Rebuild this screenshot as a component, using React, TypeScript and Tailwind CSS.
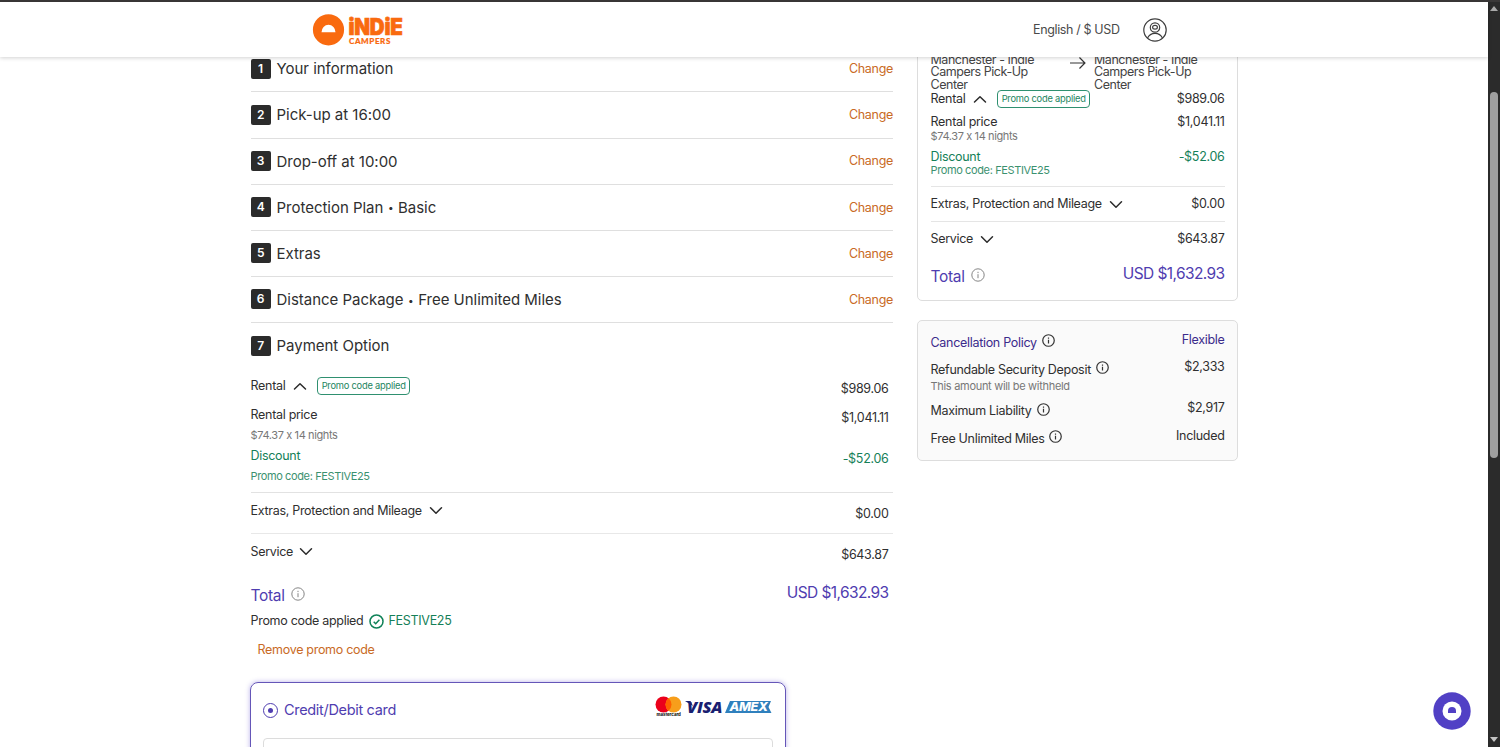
import React from 'react';

interface LineProps {
    label: React.ReactNode;
    value?: string;
    className?: string;
    valueClass?: string;
}

const steps = [
    ['Your information'],
    ['Pick-up at 16:00'],
    ['Drop-off at 10:00'],
    ['Protection Plan', 'Basic'],
    ['Extras'],
    ['Distance Package', 'Free Unlimited Miles'],
];

function Chevron({ up = false }: { up?: boolean }) {
    return (
        <svg className="shrink-0" width="14" height="9" viewBox="0 0 14 9" fill="none" stroke="#2b2b2b" strokeWidth="1.5" strokeLinecap="round" strokeLinejoin="round">
            <path d={up ? 'M1.5 7 7 1.7 12.5 7' : 'M1.5 1.7 7 7.2 12.5 1.7'} />
        </svg>
    );
}

function Info({ size = 13, color = '#333333', stroke = 1.3 }: { size?: number; color?: string; stroke?: number }) {
    return (
        <svg className="shrink-0" width={size} height={size} viewBox="0 0 14 14" fill="none" stroke={color} strokeWidth={stroke}>
            <circle cx="7" cy="7" r="6.2" />
            <path d="M7 6.2v4M7 3.8v1.3" />
        </svg>
    );
}

function Line({ label, value, className = '', valueClass = 'mt-[3px]' }: LineProps) {
    return (
        <div className={`flex h-5 justify-between whitespace-nowrap leading-5 ${className}`}>
            <div className="flex items-center">{label}</div>
            {value && <span className={valueClass}>{value}</span>}
        </div>
    );
}

function PromoBadge() {
    return (
        <span className="flex h-[18px] w-[92.5px] shrink-0 items-center justify-center rounded-[4px] border border-[#2f9070] text-[9.3px] tracking-[-0.22px] text-[#1d8560]">
            Promo code applied
        </span>
    );
}

function Logo() {
    return (
        <svg width="96" height="36" viewBox="0 0 96 36" fill="#f96a0f">
            <path fillRule="evenodd" d="M16.500 2.200a15.600 15.600 0 1 0 0 31.200a15.600 15.600 0 0 0 0-31.200ZM9.500 20.300a7 7.500 0 0 1 14 0Z" />
            <text x="36.500" y="22.600" fontFamily="Inter, sans-serif" fontSize="22.500" fontWeight="900" stroke="#f96a0f" strokeWidth="0.700" textLength="54" lengthAdjust="spacingAndGlyphs">iNDiE</text>
            <text x="37" y="31.500" fontFamily="Lato, sans-serif" fontSize="8" fontWeight="900" stroke="#f96a0f" strokeWidth="0.200" textLength="41">CAMPERS</text>
        </svg>
    );
}

function CardBrands() {
    return (
        <svg width="118" height="24" viewBox="0 0 118 24">
            <circle cx="8.500" cy="9.500" r="8" fill="#eb001b" />
            <circle cx="18.500" cy="9.500" r="8" fill="#f79e1b" />
            <path d="M13.500 3.250a8 8 0 0 1 0 12.500 8 8 0 0 1 0-12.500Z" fill="#ff5f00" />
            <text x="1.500" y="20.800" fontFamily="Inter, sans-serif" fontSize="4.300" fontWeight="800" textLength="24" fill="#222">mastercard</text>
            <text x="32" y="17.500" fontFamily="Open Sans, sans-serif" fontSize="16" fontWeight="800" fontStyle="italic" textLength="35" lengthAdjust="spacingAndGlyphs" fill="#1a1f71">VISA</text>
            <path d="M30 6h5.500l2.500 5Z" fill="#1a1f71" />
            <path d="M75 6h41l-2.500 6 3 6H70Z" fill="#2f80bd" />
            <text x="74.500" y="16.300" fontFamily="Inter, sans-serif" fontSize="12" fontWeight="800" fontStyle="italic" textLength="38" lengthAdjust="spacingAndGlyphs" fill="#ffffff">AMEX</text>
        </svg>
    );
}

function Header() {
    return (
        <header className="relative z-10 flex h-[55px] shrink-0 items-center bg-white pl-[312px] shadow-[0_1px_4px_rgba(0,0,0,0.18)]">
            <Logo />
            <span className="ml-[625px] w-[110px] pt-[1.5px] whitespace-nowrap tracking-[-0.36px] text-[#4a4a4a]">English / $ USD</span>
            <svg width="24" height="24" viewBox="0 0 24 24" fill="none" stroke="#3f3f3f" strokeWidth="1.200">
                <circle cx="12" cy="12" r="11.200" />
                <circle cx="12" cy="9.500" r="4.700" />
                <ellipse cx="12" cy="9.300" rx="2.400" ry="1.900" />
                <path d="M4.400 20.200c1.500-3.200 4.200-4.900 7.600-4.900s6.100 1.700 7.600 4.900" />
            </svg>
        </header>
    );
}

function StepLabel({ number, parts }: { number: number; parts: string[] }) {
    return (
        <>
            <span className="mr-[6px] flex size-5 items-center justify-center rounded-[2px] bg-[#2b2b2b] text-[12px] font-semibold text-white">{number}</span>
            <span className="flex items-center pt-[1.5px] text-[15px] tracking-[-0.02px] whitespace-nowrap">
                {parts[0]}
                {parts[1] && <><span className="mx-[4.5px] text-[10px]">•</span>{parts[1]}</>}
            </span>
        </>
    );
}

function Checkout() {
    return (
        <main className="-mt-[10.7px] ml-[250.5px] w-[642.5px] shrink-0">
            {steps.map((parts, idx) => (
                <div key={parts[0]} className="flex h-[46.1px] items-center border-b border-[#dfdfdf]">
                    <StepLabel number={idx + 1} parts={parts} />
                    <span className="ml-auto pt-[1.5px] text-[#c96a25]">Change</span>
                </div>
            ))}
            <div className="flex h-[45.7px] items-center">
                <StepLabel number={7} parts={['Payment Option']} />
            </div>

            <div className="border-b border-[#e2e2e2] pt-[7.9px] pb-[5.1px]">
                <Line className="pr-[4.5px]" label={<>Rental<span className="ml-[8px] mr-[10px]"><Chevron up /></span><PromoBadge /></>} value="$989.06" />
                <Line className="mt-[9px] pr-[4.5px]" label="Rental price" value="$1,041.11" />
                <Line className="text-[11px] tracking-[-0.38px] text-[#777777]" label="$74.37 x 14 nights" />
                <Line className="mt-px pr-[4.5px] text-[#158058]" label="Discount" value="-$52.06" />
                <Line className="text-[11px] tracking-[-0.38px] text-[#3b916f]" label="Promo code: FESTIVE25" />
            </div>
            <div className="h-[41.5px] border-b border-[#e8e8e8] pt-[8px]">
                <Line className="pr-[4.5px]" label={<>Extras, Protection and Mileage<span className="ml-[7px]"><Chevron /></span></>} value="$0.00" />
            </div>
            <Line className="mt-[7.5px] pr-[4.5px]" label={<>Service<span className="ml-[6px]"><Chevron /></span></>} value="$643.87" />
            <Line
                className="mt-[24px] pr-[4.5px] text-[15.5px] text-[#4f3db0]"
                label={<>Total<span className="mb-[4px] ml-[6px]"><Info size={14} color="#777777" stroke={0.9} /></span></>}
                value="USD $1,632.93"
                valueClass="-mt-[3px] tracking-[-0.6px]"
            />
            <Line
                className="mt-[5.8px]"
                label={
                    <>
                        Promo code applied
                        <svg className="mr-[4.5px] ml-[5.5px]" width="15" height="15" viewBox="0 0 15 15" fill="none" stroke="#0f8258" strokeWidth="1.500">
                            <circle cx="7.500" cy="7.500" r="6.500" />
                            <path d="m4.700 7.700 2 2 3.700-4" />
                        </svg>
                        <span className="text-[#158058]">FESTIVE25</span>
                    </>
                }
            />
            <Line className="mt-[9px] pl-[7px] text-[#c96a25]" label="Remove promo code" />

            <section className="mt-[21.2px] -ml-[0.5px] h-[120px] w-[536px] rounded-[8px] border border-[#6556b8] px-3 shadow-[0_0_5px_rgba(80,60,200,0.4)]">
                <div className="flex h-[55px] items-center text-[14.5px] tracking-[-0.32px] text-[#4f3db0]">
                    <span className="mr-[6px] flex size-[15px] items-center justify-center rounded-full border border-[#4f3db0]">
                        <span className="size-[5px] rounded-full bg-[#4f3db0]" />
                    </span>
                    <span>Credit/Debit card</span>
                    <span className="mb-[6px] ml-auto"><CardBrands /></span>
                </div>
                <div className="h-12 rounded-[4px] border border-[#dcdcdc]" />
            </section>
        </main>
    );
}

function Place() {
    return (
        <div className="w-[131px] leading-[12.4px] tracking-[-0.45px] text-[#444444]">
            Manchester - Indie<br />Campers Pick-Up<br />Center
        </div>
    );
}

function InfoMark() {
    return <span className="mb-[4px] ml-[5px]"><Info /></span>;
}

function Summary() {
    return (
        <aside className="-mt-2 ml-[24px] w-[320.5px] shrink-0">
            <section className="h-[252px] rounded-b-[5px] border border-[#dddddd] pr-3 pl-[12.5px]">
                <div className="flex pt-[4px]">
                    <Place />
                    <svg className="mt-[2px] mr-[8px] ml-[9px]" width="16" height="14" viewBox="0 0 16 14" fill="none" stroke="#333333" strokeWidth="1.200">
                        <path d="M0 7h15M9.500 1.500 15 7l-5.500 5.500" />
                    </svg>
                    <Place />
                </div>
                <div className="h-[97.5px] border-b border-[#e5e5e5]">
                    <Line className="-mt-[2px]" valueClass="" label={<>Rental<span className="ml-[8px] mr-[10px]"><Chevron up /></span><PromoBadge /></>} value="$989.06" />
                    <Line className="mt-[3px]" valueClass="" label="Rental price" value="$1,041.11" />
                    <Line className="-mt-[6.5px] text-[11px] tracking-[-0.38px] text-[#777777]" label="$74.37 x 14 nights" />
                    <Line className="mt-px text-[#158058]" valueClass="" label="Discount" value="-$52.06" />
                    <Line className="-mt-[6.5px] text-[11px] tracking-[-0.38px] text-[#3b916f]" label="Promo code: FESTIVE25" />
                </div>
                <div className="h-[35.5px] border-b border-[#e5e5e5] pt-[7.5px]">
                    <Line valueClass="" label={<>Extras, Protection and Mileage<span className="ml-[7px]"><Chevron /></span></>} value="$0.00" />
                </div>
                <Line className="mt-[7px]" valueClass="" label={<>Service<span className="ml-[7px]"><Chevron /></span></>} value="$643.87" />
                <Line
                    className="mt-[18px] text-[15.5px] text-[#4f3db0]"
                    label={<>Total<span className="mb-[4px] ml-[6px]"><Info size={14} color="#777777" stroke={0.9} /></span></>}
                    value="USD $1,632.93"
                    valueClass="-mt-[3px] tracking-[-0.6px]"
                />
            </section>
            <section className="mt-[19px] h-[141px] rounded-[5px] border border-[#dddddd] bg-[#fafafa] pt-[11.5px] pr-3 pl-[12.5px]">
                <Line className="text-[#3b2b8b]" valueClass="-mt-[3px]" label={<>Cancellation Policy<InfoMark /></>} value="Flexible" />
                <Line className="mt-[7px]" valueClass="-mt-[3px]" label={<>Refundable Security Deposit<InfoMark /></>} value="$2,333" />
                <Line className="-mt-[3.5px] text-[11px] text-[#777777]" label="This amount will be withheld" />
                <Line className="mt-[5px]" valueClass="-mt-[3px]" label={<>Maximum Liability<InfoMark /></>} value="$2,917" />
                <Line className="mt-[7.5px]" valueClass="-mt-[3px]" label={<>Free Unlimited Miles<InfoMark /></>} value="Included" />
            </section>
        </aside>
    );
}

function Scrollbar() {
    return (
        <div className="flex w-[12px] shrink-0 flex-col items-center bg-[#2b2b2b]">
            <svg className="mt-[4px]" width="8" height="5" viewBox="0 0 8 5" fill="#aaaaaa"><path d="M0 5 4 0l4 5Z" /></svg>
            <div className="mt-[81px] h-[366px] w-[8px] rounded-full bg-[#9f9f9f]" />
            <svg className="mt-auto mb-[5px]" width="8" height="5" viewBox="0 0 8 5" fill="#c4c4c4"><path d="m0 0 4 5 4-5Z" /></svg>
        </div>
    );
}

export default function App() {
    return (
        <div className="flex h-[747px] w-[1500px] flex-col overflow-hidden bg-white font-['Inter','Liberation_Sans',sans-serif] text-[12.5px] tracking-[-0.3px] text-[#2f2f2f] [font-feature-settings:'calt'_0]">
            <div className="h-[2px] shrink-0 bg-[#3a3838]" />
            <div className="flex min-h-0 flex-1">
                <div className="flex min-w-0 flex-1 flex-col">
                    <Header />
                    <div className="flex min-h-0 flex-1 items-start overflow-hidden">
                        <Checkout />
                        <Summary />
                    </div>
                </div>
                <Scrollbar />
            </div>
            <button className="absolute top-[692px] left-[1433px] size-[38px]" aria-label="Chat">
                <svg width="38" height="38" viewBox="0 0 38 38">
                    <circle cx="19" cy="19" r="18.700" fill="#5140c5" />
                    <circle cx="19" cy="19" r="9.500" fill="#ffffff" />
                    <path d="M15 21v-2a4 4 0 0 1 8 0v2Z" fill="#5140c5" />
                </svg>
            </button>
        </div>
    );
}
